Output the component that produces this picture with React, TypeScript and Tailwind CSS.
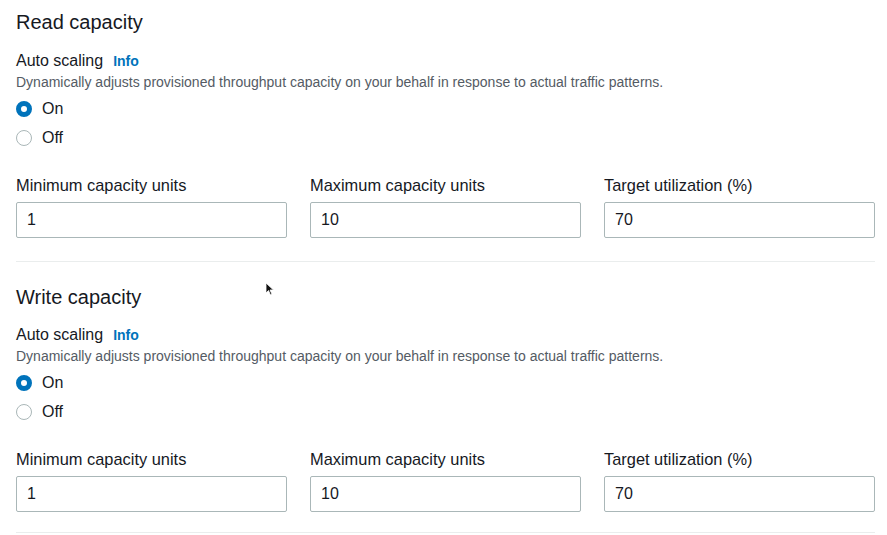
import React from "react";

const font = { fontFamily: '"Liberation Sans", Arial, sans-serif' };

function Radio({ checked, label }: { checked: boolean; label: string }) {
  return (
    <div className="flex h-[22px] items-center gap-[10px]">
      {checked ? (
        <span className="box-border h-[16px] w-[16px] rounded-full border-[5px] border-[#0073bb] bg-white" />
      ) : (
        <span className="box-border h-[16px] w-[16px] rounded-full border-[1.5px] border-[#aab7b8] bg-white" />
      )}
      <span className="text-[16px] text-[#16191f]">{label}</span>
    </div>
  );
}

function Field({ label, value }: { label: string; value: string }) {
  return (
    <div className="flex flex-col">
      <div className="h-[20px] text-[16.4px] leading-[20px] text-[#16191f]">{label}</div>
      <div className="mt-[7px] flex h-[36px] items-center rounded-[2px] border border-[#aab7b8] bg-white px-[10px] text-[16px] text-[#16191f]">
        {value}
      </div>
    </div>
  );
}

function Section({ title, labelGap }: { title: string; labelGap: string }) {
  return (
    <div className="flex flex-col">
      <h2 className="h-[24px] text-[20px] leading-[24px] text-[#16191f]">{title}</h2>
      <div className={labelGap}>
        <div className="flex h-[20px] items-center gap-[10px] leading-[20px]">
          <span className="text-[16px] text-[#16191f]">Auto scaling</span>
          <span className="text-[14px] font-bold text-[#0073bb]">Info</span>
        </div>
        <div className="mt-[3px] h-[16px] whitespace-nowrap text-[14px] leading-[16px] text-[#545b64]">
          Dynamically adjusts provisioned throughput capacity on your behalf in response to actual traffic patterns.
        </div>
        <div className="mt-[8px] flex flex-col gap-[7px]">
          <Radio checked label="On" />
          <Radio checked={false} label="Off" />
        </div>
      </div>
      <div className="mt-[26px] grid grid-cols-3 gap-[23px]">
        <Field label="Minimum capacity units" value="1" />
        <Field label="Maximum capacity units" value="10" />
        <Field label="Target utilization (%)" value="70" />
      </div>
    </div>
  );
}

export default function App() {
  return (
    <div className="relative min-h-[535px] w-[887px] overflow-hidden bg-white" style={font}>
      <div className="pl-4 pr-3 pt-[10px]">
        <Section title="Read capacity" labelGap="mt-[17px]" />
        <div className="mt-[23px] h-px bg-[#eaeded]" />
        <div className="mt-[23px]">
          <Section title="Write capacity" labelGap="mt-[16px]" />
        </div>
        <div className="mt-[20px] h-px bg-[#eaeded]" />
      </div>
      <svg className="absolute left-[265px] top-[282px]" width="10" height="14" viewBox="0 0 10 14">
        <path d="M1 1 L1 11 L3.5 8.5 L5.5 13 L7 12.3 L5 8 L8.5 8 Z" fill="#111" stroke="#fff" strokeWidth="0.8" />
      </svg>
    </div>
  );
}
